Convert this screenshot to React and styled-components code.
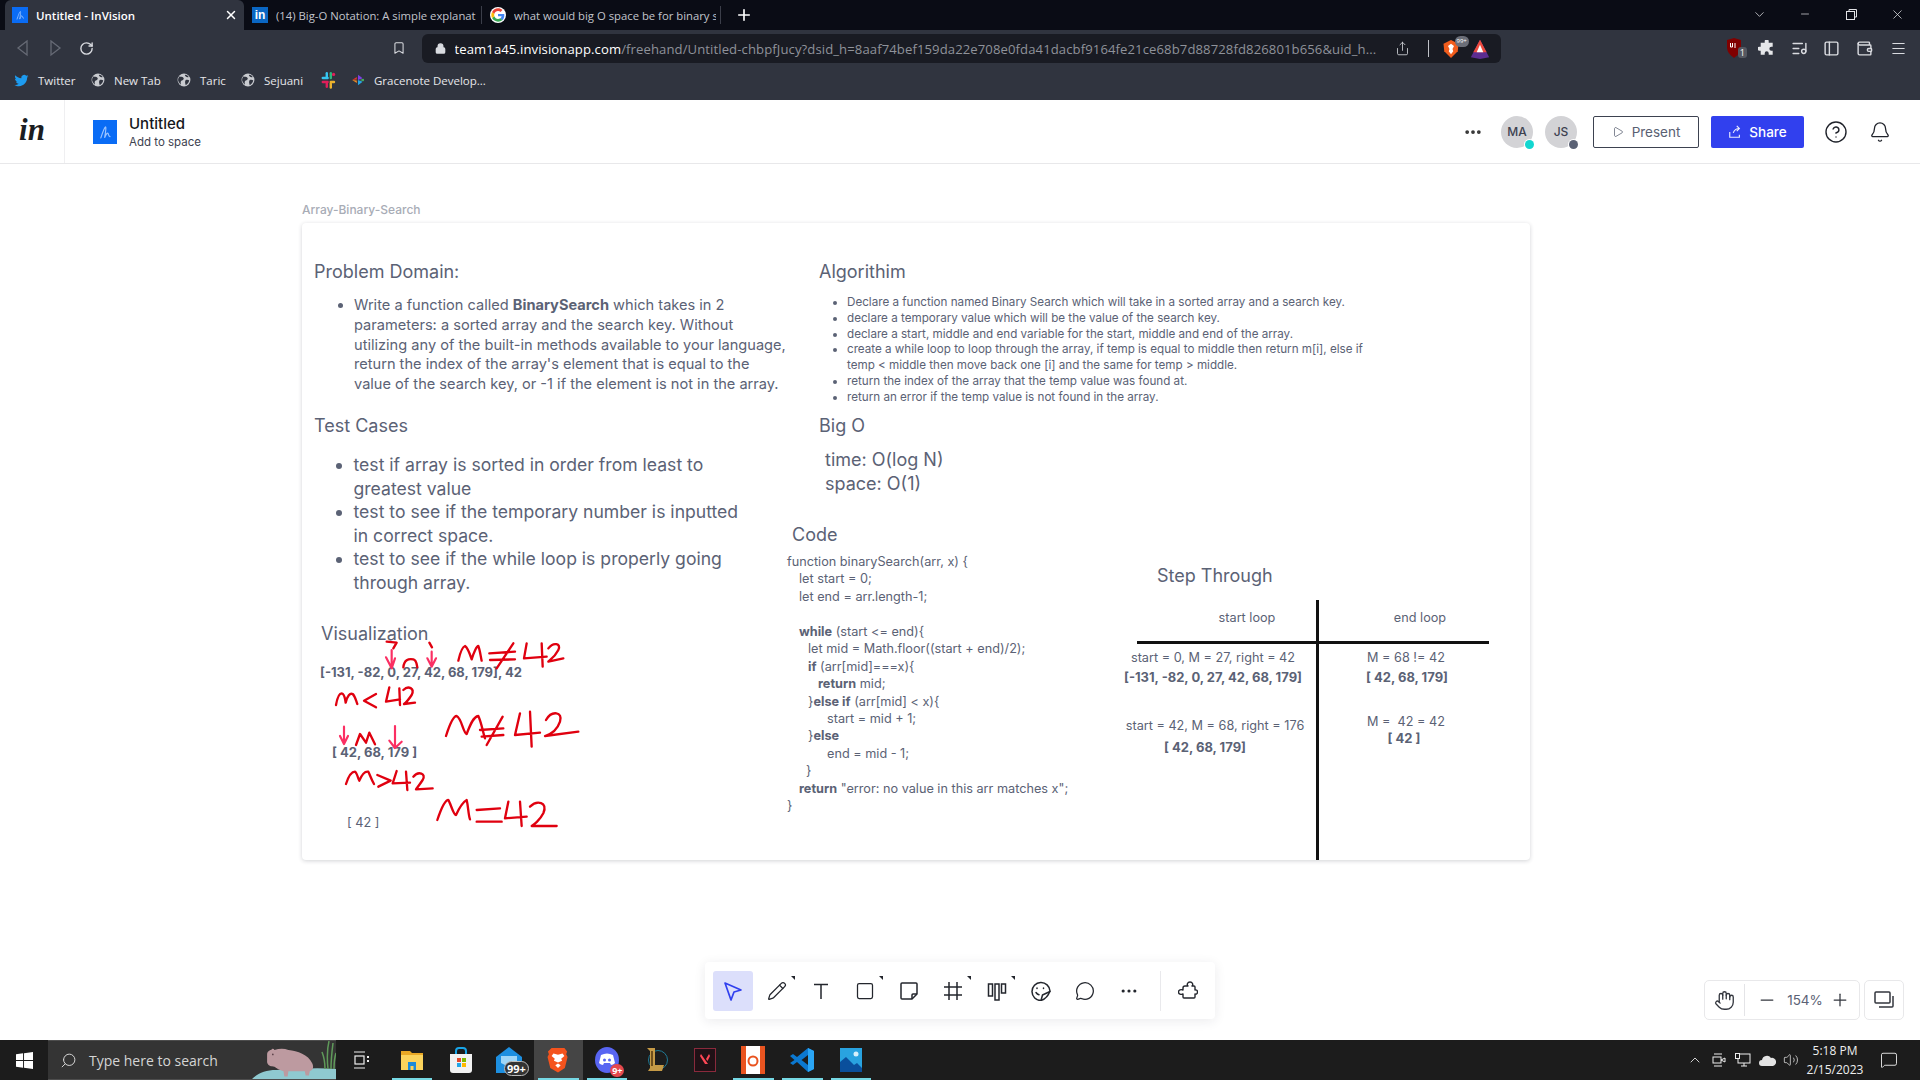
import React from 'react';
import styled, { createGlobalStyle } from 'styled-components';
import {
  Bell, Bookmark, ChevronDown, ChevronUp, CircleHelp, Ellipsis, Hand, ListMusic, Lock, MessageCircle, Minus,
  PanelLeft, Pencil, Play, Plus, RotateCw, Search, Share, Square, Wallet, X,
  Menu, Volume2, MessageSquare,
} from 'lucide-react';

const Global = createGlobalStyle`
  html, body { margin: 0; padding: 0; background: #fff; }
  * { box-sizing: border-box; }
  body { font-family: Inter, "Liberation Sans", sans-serif; }
`;

const Page = styled.div`
  width: 1920px; height: 1080px; overflow: hidden; display: flex; flex-direction: column; background: #fff;
`;

/* ---------- browser chrome ---------- */
const TabStrip = styled.div`
  height: 30px; background: #0a0c15; display: flex; align-items: stretch; padding-left: 5px;
  font-family: "Open Sans", Roboto, sans-serif; font-size: 11.5px; color: #c9ccd3;
`;
const Tab = styled.div`
  width: ${p => p.$w}px; display: flex; align-items: center; gap: 8px; padding-left: ${p => p.$pad}px; position: relative;
  background: ${p => (p.$active ? '#30343f' : 'transparent')};
  color: ${p => (p.$active ? '#fff' : '#c2c5cc')};
  font-weight: ${p => (p.$active ? 600 : 400)};
  font-size: ${p => (p.$active ? 11.5 : 11.3)}px;
  border-radius: ${p => (p.$active ? '6px 6px 0 0' : 0)};
  border-right: ${p => (p.$sep ? '1px solid #3b3e49' : 'none')};
  margin: ${p => (p.$sep ? '6px 0' : 0)};
`;
const TabTitle = styled.span`
  flex: 1; white-space: nowrap; overflow: hidden; margin-right: ${p => p.$mr || 0}px;
`;
const TabClose = styled.span`
  display: flex; margin-right: 6px; color: #fff;
`;
const NewTab = styled.div`
  width: 46px; display: flex; align-items: center; justify-content: center; color: #fff;
`;
const WindowButtons = styled.div`
  margin-left: auto; display: flex; align-items: center; color: #e2e3e6; padding-bottom: 2px;
`;
const WinBtn = styled.div`
  width: 46px; display: flex; justify-content: center;
`;
const NavBar = styled.div`
  height: 36px; background: #30343f; display: flex; align-items: center; padding-left: 6.500px; color: #d9dbe0;
  font-family: "Open Sans", Roboto, sans-serif;
`;
const NavIcon = styled.div`
  width: ${p => p.$w || 32}px; display: flex; justify-content: center; position: relative; flex-shrink: 0;
  color: ${p => p.$color || '#d9dbe0'};
`;
const NavGap = styled.div`
  width: 289px; flex-shrink: 0;
`;
const AddressBar = styled.div`
  margin-left: 16px; width: 1079px; height: 29px; margin-top: 4px; margin-bottom: 3px; background: #191b23; border-radius: 6px;
  display: flex; align-items: center; padding-left: 13px; font-size: 13.100px; flex-shrink: 0;
`;
const Url = styled.span`
  margin-left: 9px; width: 933px; white-space: nowrap; overflow: hidden; color: #8f929a; letter-spacing: 0.1px;
  b { color: #fff; font-weight: 500; }
`;
const ExtDivider = styled.div`
  width: 1px; height: 17px; background: #c0c2c8; margin: 0 8px 0 10px;
`;
const NavRight = styled.div`
  margin-left: 216.500px; display: flex; align-items: center;
`;
const CountBadge = styled.span`
  position: absolute; right: ${p => p.$r}px; top: ${p => p.$t}px; background: ${p => p.$bg}; color: #fff; font-size: ${p => p.$fs}px;
  padding: 0 2px; border-radius: 3px; line-height: 11px;
`;
const BookmarkBar = styled.div`
  height: 34px; background: #30343f; display: flex; align-items: center; padding: 0 0 6px 14px; gap: 0;
  font-family: "Open Sans", Roboto, sans-serif; font-size: 11.5px; color: #e6e7ea;
`;
const BookmarkItem = styled.div`
  display: flex; align-items: center; gap: 9px; width: ${p => p.$w}px; flex-shrink: 0; white-space: nowrap;
`;

/* ---------- app header ---------- */
const AppHeader = styled.header`
  height: 64px; display: flex; align-items: center; border-bottom: 1px solid #e8e8ea; background: #fff;
  padding-right: 29px;
`;
const LogoCell = styled.div`
  width: 65px; height: 100%; display: flex; align-items: center; justify-content: center; border-right: 1px solid #efeff1;
  font-family: "Liberation Serif", serif; font-style: italic; font-weight: 700; font-size: 31px; color: #1b1d22; padding-bottom: 4px;
`;
const DocIcon = styled.div`
  margin-left: 28px; width: 24px; height: 24px; background: #0a6cf5; display: flex; align-items: center; justify-content: center;
`;
const DocInfo = styled.div`
  margin-left: 12px; display: flex; flex-direction: column; gap: 2px; padding-top: 2px;
`;
const DocTitle = styled.div`
  font-size: 15px; font-weight: 500; color: #15171c; line-height: 18px;
`;
const DocSub = styled.div`
  font-size: 11.500px; color: #3d4250; line-height: 15px;
`;
const HeaderRight = styled.div`
  margin-left: auto; display: flex; align-items: center;
`;
const Dots = styled.div`
  display: flex; color: #333; margin-right: 18px;
`;
const Avatar = styled.div`
  width: 32px; height: 32px; border-radius: 50%; background: #d3d3d6; color: #3c4150; display: flex; align-items: center;
  justify-content: center; font-size: 12px; font-weight: 500; position: relative; margin-right: 12px;
  &::after {
    content: ''; position: absolute; right: -1px; bottom: -1px; width: 9px; height: 9px; border-radius: 50%;
    background: ${p => p.$dot}; box-shadow: 0 0 0 1px #fff;
  }
`;
const PresentButton = styled.button`
  width: 106px; height: 32px; margin-left: 4px; background: #fff; border: 1px solid #3d4250; border-radius: 2px; color: #596072;
  display: flex; align-items: center; justify-content: center; gap: 8px; font: 400 13.500px Inter, sans-serif;
`;
const ShareButton = styled.button`
  width: 93px; height: 32px; margin-left: 12px; background: #3140ee; border: 0; border-radius: 2px; color: #fff;
  display: flex; align-items: center; justify-content: center; gap: 7px; font: 500 13.500px Inter, sans-serif;
`;
const HeaderIcon = styled.div`
  display: flex; color: #20232b; margin-left: ${p => p.$ml}px;
`;

/* ---------- board ---------- */
const Board = styled.main`
  flex: 1; position: relative; padding: 38px 0 0 302px; background: #fff; color: #5b6275;
`;
const BoardLabel = styled.div`
  font-size: 12px; font-weight: 500; color: #a8acb6; line-height: 15px; margin-bottom: 6px;
`;
const Card = styled.section`
  width: 1228px; height: 637px; background: #fff; border-radius: 4px; position: relative;
  box-shadow: 0 1px 4px rgba(30, 35, 50, 0.2);
`;
const Placed = styled.div`
  position: absolute; left: ${p => p.$x}px; top: ${p => p.$y}px;
`;
const Heading = styled(Placed)`
  font-size: 18px; line-height: 24px; color: #5b6275; white-space: nowrap;
`;
const BulletList = styled.ul`
  position: absolute; margin: 0; left: ${p => p.$x}px; top: ${p => p.$y}px; width: ${p => p.$w}px; padding-left: ${p => p.$pad}px;
  font-size: ${p => p.$fs}px; line-height: ${p => p.$lh}px; color: #5b6275;
  b { font-weight: 700; }
`;
const BigOText = styled(Placed)`
  font-size: 18px; line-height: 24px; color: #5b6275; white-space: nowrap;
`;
const CodeBlock = styled(Placed)`
  font-size: 12.700px; line-height: 17.45px; color: #5b6275; white-space: nowrap;
  b { font-weight: 700; }
`;
const CodeLine = styled.div`
  padding-left: ${p => p.$indent}px; height: 17.45px;
`;
const SmallText = styled(Placed)`
  font-size: ${p => (p.$bold ? 13 : 12.7)}px; line-height: 18px; color: #5b6275; white-space: nowrap; font-weight: ${p => (p.$bold ? 700 : 400)};
`;
const CellText = styled(SmallText)`
  transform: translateX(-50%);
`;
const VRule = styled.div`
  position: absolute; left: 1014px; top: 377px; width: 3px; height: 260px; background: #111;
`;
const HRule = styled.div`
  position: absolute; left: 835px; top: 418px; width: 352px; height: 3px; background: #111;
`;
const Ink = styled.svg`
  position: absolute; left: -2px; top: 387px; width: 300px; height: 240px; pointer-events: none; fill: none;
  stroke-linecap: round; stroke-linejoin: round;
`;

/* ---------- floating tools ---------- */
const ToolDock = styled.div`
  position: absolute; left: 705px; top: 798px; width: 510px; height: 57px; background: #fff; border-radius: 4px;
  box-shadow: 0 2px 12px rgba(30, 35, 50, 0.09); display: flex; align-items: center; padding-left: 8px; color: #23262d;
`;
const ToolButton = styled.div`
  width: 40px; height: 40px; margin-right: 4px; border-radius: 3px; display: flex; align-items: center; justify-content: center; position: relative;
  background: ${p => (p.$active ? '#dcdffb' : 'transparent')}; color: ${p => (p.$active ? '#3140ee' : '#23262d')};
  ${p => p.$caret && `
    &::after {
      content: ''; position: absolute; right: 2px; top: 5px; width: 0; height: 0;
      border-top: 4px solid #23262d; border-left: 4px solid transparent;
    }
  `}
`;
const DockDivider = styled.div`
  width: 1px; height: 40px; background: #e9e9ec; margin: 0 7px 0 7px;
`;
const ViewGroup = styled.div`
  position: absolute; top: 816px; right: ${p => p.$right}px; width: ${p => p.$w}px; height: 40px; background: #fff;
  border: 1px solid #e8e8ea; border-radius: 5px; display: flex; align-items: center; color: #33363e;
`;
const ViewIcon = styled.div`
  width: ${p => p.$w}px; display: flex; justify-content: center; flex-shrink: 0;
`;
const ViewDivider = styled.div`
  width: 1px; height: 32px; background: #e4e4e7; flex-shrink: 0;
`;
const ZoomValue = styled.div`
  width: 32px; display: flex; justify-content: center; white-space: nowrap; font-size: 13.500px; color: #5b6275; flex-shrink: 0;
`;

/* ---------- taskbar ---------- */
const Taskbar = styled.footer`
  height: 40px; background: #1c1c1c; display: flex; align-items: stretch; color: #eee; font-family: "Open Sans", Roboto, sans-serif;
`;
const StartCell = styled.div`
  width: 48px; display: flex; align-items: center; justify-content: center;
`;
const SearchBox = styled.div`
  width: 288px; background: #343434; display: flex; align-items: center; padding-left: 12px; gap: 12px; position: relative;
  border: 1px solid #4d4d4d; border-width: 1px 0; font-size: 14px; color: #d5d5d5; overflow: hidden;
`;
const SearchGlyph = styled(Search)`
  transform: scaleX(-1);
`;
const Hippo = styled.svg`
  position: absolute; right: 0; bottom: 0; width: 84px; height: 40px;
`;
const TaskView = styled.div`
  width: 51.5px; display: flex; align-items: center; justify-content: center;
`;
const TaskSlot = styled.div`
  width: 48.8px; display: flex; align-items: center; justify-content: center; position: relative; flex-shrink: 0;
  background: ${p => (p.$active ? '#454545' : 'transparent')};
  ${p => p.$open && `
    &::after {
      content: ''; position: absolute; left: 4px; right: 4px; bottom: 0; height: 2px; background: #76d8e4;
    }
  `}
`;
const Tray = styled.div`
  margin-left: auto; display: flex; align-items: center; padding-right: 22px; color: #eee;
`;
const TrayIcon = styled.div`
  width: 24px; display: flex; justify-content: center;
`;
const Clock = styled.div`
  margin-left: 1px; width: 62px; text-align: center; font-size: 12px; line-height: 19px; color: #eee;
`;
const NotifyIcon = styled.div`
  margin-left: 14px; display: flex;
`;
const SlotBadge = styled.span`
  position: absolute; right: ${p => p.$r}px; bottom: ${p => p.$b}px; background: ${p => p.$bg}; color: #fff; font-size: ${p => p.$fs}px;
  font-weight: 700; border-radius: 8px; padding: 0 2px; line-height: 13px; border: ${p => p.$bd || 'none'};
`;

/* ---------- small drawings ---------- */
const Scribble = ({ size = 16 }) => (
  <svg width={size} height={size} viewBox="0 0 24 24" fill="none">
    <path d="M7 19C9 13 11 7 12.5 6c1-.5.5 5-1 13 1.5-4 3-6 4-5.500s0 3.500 2.500 4" stroke="#9cc4ff" strokeWidth="1.400" strokeLinecap="round" />
  </svg>
);
const FavSquare = styled.span`
  width: 16px; height: 16px; background: ${p => p.$bg}; color: #fff; display: flex; align-items: center; justify-content: center; flex-shrink: 0;
  font: 700 12px "Liberation Sans", sans-serif;
`;
const InvisionFav = () => (
  <FavSquare $bg="#0a6cf5"><Scribble size={14} /></FavSquare>
);
const GoogleIcon = styled.svg`
  flex-shrink: 0;
`;
const GoogleG = () => (
  <GoogleIcon width="16" height="16" viewBox="0 0 48 48">
    <circle cx="24" cy="24" r="24" fill="#fff" />
    <path fill="#4285F4" d="M43 24.500c0-1.500-.1-2.600-.4-3.800H24v7.200h10.900c-.5 2.700-2 5-4.400 6.500l6.700 5.200c4-3.700 5.800-9.100 5.800-15.100z" />
    <path fill="#34A853" d="M24 44c5.400 0 9.900-1.800 13.200-4.800l-6.700-5.200c-1.800 1.200-4 2-6.500 2-5.100 0-9.400-3.400-10.900-8.100l-6.900 5.300C9.500 39.600 16.200 44 24 44z" />
    <path fill="#FBBC05" d="M13.100 27.900c-.8-2.400-.8-5.300 0-7.800l-6.900-5.300c-2.900 5.800-2.900 12.600 0 18.400z" />
    <path fill="#EA4335" d="M24 12.100c3 0 5.600 1 7.600 2.900l5.800-5.800C33.900 6 29.400 4 24 4 16.200 4 9.500 8.400 6.200 14.800l6.900 5.300c1.500-4.600 5.800-8 10.900-8z" />
  </GoogleIcon>
);
const Globe = () => (
  <svg width="14" height="14" viewBox="0 0 24 24">
    <circle cx="12" cy="12" r="11" fill="#c9cbd0" />
    <path d="M4 6c3 1 5 0 7 2s-1 4-3 5-2 4-1 7c-3-2-6-6-5-10zM14 3c3 0 5 2 6 4-2 1-4 0-5-1s-2-2-1-3zM15 12c3-1 5 0 6 1-1 4-3 6-6 8-1-3-2-7 0-9z" fill="#30343f" />
  </svg>
);
const TwitterBird = () => (
  <svg width="15" height="15" viewBox="0 0 24 24">
    <path fill="#1d9bf0" d="M23 5c-.8.4-1.700.6-2.600.7.900-.6 1.600-1.400 2-2.500-.9.500-1.900.9-2.900 1.100A4.600 4.600 0 0 0 11.700 8.500C7.900 8.300 4.500 6.500 2.200 3.700c-1.200 2.100-.6 4.800 1.400 6.100-.7 0-1.400-.2-2-.6 0 2.200 1.500 4.100 3.700 4.600-.7.200-1.400.2-2.100.1.600 1.900 2.300 3.200 4.300 3.200A9.300 9.300 0 0 1 .7 19c2.100 1.300 4.500 2.100 7.100 2.100 8.600 0 13.500-7.300 13.200-13.800.9-.6 1.600-1.400 2-2.300z" />
  </svg>
);
const Slack = () => (
  <svg width="16" height="20" viewBox="0 0 20 24">
    <rect x="2" y="8" width="9" height="3" rx="1.500" fill="#36c5f0" />
    <rect x="7" y="2" width="3" height="8" rx="1.500" fill="#36c5f0" />
    <rect x="12" y="2" width="3" height="9" rx="1.500" fill="#2eb67d" />
    <circle cx="17" cy="5" r="2" fill="#e01e5a" />
    <rect x="2" y="13" width="9" height="3" rx="1.500" fill="#e01e5a" />
    <rect x="7" y="14" width="3" height="8" rx="1.500" fill="#e01e5a" />
    <rect x="12" y="13" width="7" height="3" rx="1.500" fill="#ecb22e" />
    <rect x="12" y="15" width="3" height="8" rx="1.500" fill="#ecb22e" />
  </svg>
);
const Gracenote = () => (
  <svg width="14" height="14" viewBox="0 0 24 24">
    <path d="M2 12l8-5v4z" fill="#e5342b" />
    <path d="M2 12l8 5v-4z" fill="#f08a24" />
    <path d="M12 3l8 6-8 3z" fill="#7b3fe4" />
    <path d="M12 21l8-6-8-3z" fill="#27a6e5" />
    <path d="M15 12l7-2v4z" fill="#4cc065" />
  </svg>
);
const BraveLion = ({ size = 20 }) => (
  <svg width={size} height={size * 1.16} viewBox="0 0 24 28">
    <path fill="#f4531d" d="M5 1h14l3 4-1 3 1.500 3-3 12L12 28l-8.500-5-3-12L2 8 1 5z" />
    <path fill="#fff" d="M7 7l5 1.500L17 7l2 3-3.500 3 1 2L12 17l-4.500-2 1-2L5 10zM9 20l3-2 3 2-3 3z" />
  </svg>
);
const BatShield = () => (
  <svg width="18" height="20" viewBox="0 0 24 26">
    <path fill="#f15d1d" d="M12 1l10 5-1 10-9 9-9-9-1-10z" />
    <path fill="#fff" d="M12 6l4 3-2 4 1 3-3 4-3-4 1-3-2-4z" />
  </svg>
);
const BatTriangle = () => (
  <svg width="20" height="20" viewBox="0 0 24 24">
    <path fill="#5c2d91" d="M12 1L23 22 12 24 1 22z" />
    <path fill="#ee4a3c" d="M12 1l8 15H4z" />
    <path fill="#fff" d="M12 7l4 9H8z" />
  </svg>
);
const UBlock = () => (
  <svg width="14" height="20" viewBox="0 0 14 20">
    <path fill="#800000" d="M7 0l7 2v7c0 5-3 8-7 11-4-3-7-6-7-11V2z" />
    <path stroke="#fff" strokeWidth="1" fill="none" d="M3.500 5v4h2V5M8 5v5" />
  </svg>
);
const SolidPuzzle = () => (
  <svg width="17" height="17" viewBox="0 0 24 24">
    <path fill="#e6e7ea" d="M9 2a3 3 0 0 1 6 0v2h6v6h-2a3 3 0 0 0 0 6h2v6h-6v-2a3 3 0 0 0-6 0v2H3v-6H1a3 3 0 0 1 0-6h2V4h6z" transform="translate(1 0) scale(.94)" />
  </svg>
);
const TypeTool = () => (
  <svg width="20" height="20" viewBox="0 0 20 20" fill="none" stroke="currentColor" strokeWidth="1.500">
    <path d="M3 3.500h14M10 3.500V18" />
  </svg>
);
const ArrowTool = () => (
  <svg width="22" height="22" viewBox="0 0 22 22" fill="none" stroke="currentColor" strokeWidth="1.700" strokeLinejoin="round">
    <path d="M3 3l16 7-7 2-3 8z" />
  </svg>
);
const StickyTool = () => (
  <svg width="20" height="20" viewBox="0 0 20 20" fill="none" stroke="currentColor" strokeWidth="1.500" strokeLinejoin="round">
    <path d="M2 3a1 1 0 0 1 1-1h14a1 1 0 0 1 1 1v10l-5 5H3a1 1 0 0 1-1-1z" />
    <path d="M18 13h-4a1 1 0 0 0-1 1v4" />
  </svg>
);
const GridTool = () => (
  <svg width="20" height="20" viewBox="0 0 20 20" fill="none" stroke="currentColor" strokeWidth="1.500">
    <path d="M6 1v18M14 1v18M1 6h18M1 14h18" />
  </svg>
);
const ColumnsTool = () => (
  <svg width="20" height="20" viewBox="0 0 20 20" fill="none" stroke="currentColor" strokeWidth="1.500">
    <rect x="1.500" y="3" width="4" height="12" />
    <rect x="8" y="3" width="4" height="16" />
    <rect x="14.500" y="3" width="4" height="9" />
  </svg>
);
const StickerTool = () => (
  <svg width="20" height="20" viewBox="0 0 20 20" fill="none" stroke="currentColor" strokeWidth="1.500" strokeLinecap="round" strokeLinejoin="round">
    <path d="M19 10A9 9 0 1 0 10 19.500c3-1 7-4 9-9.500z" />
    <path d="M19 10.500l-7.500 3.500-1.500 5.500" />
    <path d="M6 7v.5M12.500 7v.5M5 11.500c1 1.500 2 2 3 2.200" />
  </svg>
);
const PuzzleTool = () => (
  <svg width="20" height="20" viewBox="0 0 20 20" fill="none" stroke="currentColor" strokeWidth="1.400" strokeLinejoin="round">
    <path d="M7 5h3c-1.500-1.500-.5-4 2-4s3.500 2.500 2 4h2a1 1 0 0 1 1 1v3c1.500-.5 2.500.5 2.500 2s-1 2.500-2.500 2v3a1 1 0 0 1-1 1H6a1 1 0 0 1-1-1v-3c-2 1-4.500 0-4.500-2s2.500-3 4.500-2V7a2 2 0 0 1 2-2z" />
  </svg>
);
const StackIcon = () => (
  <svg width="20" height="18" viewBox="0 0 20 18" fill="none" stroke="currentColor" strokeWidth="1.500">
    <rect x="1" y="1" width="15" height="11" rx="1" />
    <path d="M19 5v10a1 1 0 0 1-1 1H5" />
  </svg>
);
const ShareOut = () => (
  <svg width="14" height="14" viewBox="0 0 16 16" fill="none" stroke="#fff" strokeWidth="1.300">
    <path d="M2 8v6h11V11M6 9c1-3 3-5 7-5M10 1l3 3-3 3" opacity=".9" />
  </svg>
);
const WinLogo = () => (
  <svg width="17" height="17" viewBox="0 0 18 18" fill="#fff">
    <path d="M0 2.500L7.500 1.400V8.500H0zM8.500 1.200L18 0V8.500H8.500zM0 9.500H7.500V16.600L0 15.500zM8.500 9.500H18V18L8.500 16.800z" />
  </svg>
);
const TaskViewIcon = () => (
  <svg width="16" height="18" viewBox="0 0 16 18" fill="none" stroke="#eee" strokeWidth="1.200">
    <path d="M0 1h11M0 17h11" />
    <rect x="1" y="5" width="9" height="8" />
    <rect x="13" y="5" width="2" height="2" fill="#eee" stroke="none" />
    <rect x="13" y="9" width="2" height="2" fill="#eee" stroke="none" />
  </svg>
);
const Explorer = () => (
  <svg width="22" height="20" viewBox="0 0 22 20">
    <path fill="#e9a825" d="M0 1h9l2 2h11v17H0z" />
    <path fill="#fbd35c" d="M0 5h22v15H0z" />
    <path fill="#1a8ad8" d="M7 12h8v8h-2.500v-4h-3v4H7z" />
  </svg>
);
const Store = () => (
  <svg width="24" height="26" viewBox="0 0 24 26">
    <path d="M7 7V4a3 3 0 0 1 3-3h4a3 3 0 0 1 3 3v3" fill="none" stroke="#18a5e8" strokeWidth="2" />
    <path fill="#f2f2f2" d="M1 7h22v16a3 3 0 0 1-3 3H4a3 3 0 0 1-3-3z" />
    <rect x="8" y="11" width="4" height="4" fill="#e5492c" />
    <rect x="13" y="11" width="4" height="4" fill="#7fba00" />
    <rect x="8" y="16" width="4" height="4" fill="#22a7e8" />
    <rect x="13" y="16" width="4" height="4" fill="#ffb900" />
  </svg>
);
const MailIcon = () => (
  <svg width="26" height="26" viewBox="0 0 26 26">
    <path fill="#1d8fe0" d="M0 10L13 0l13 10v16H0z" />
    <path fill="#9fd6f7" d="M5 9h16v7l-8 4-8-4z" />
  </svg>
);
const DiscordIcon = () => (
  <svg width="24" height="26" viewBox="0 0 24 26">
    <ellipse cx="12" cy="13" rx="12" ry="13" fill="#5865f2" />
    <path fill="#fff" d="M6 8c4-2 8-2 12 0l2 8c-1 1-3 2-4 2l-1-2H9l-1 2c-1 0-3-1-4-2z" />
    <circle cx="9.500" cy="13" r="1.500" fill="#5865f2" />
    <circle cx="14.500" cy="13" r="1.500" fill="#5865f2" />
  </svg>
);
const LolIcon = () => (
  <svg width="24" height="26" viewBox="0 0 24 26">
    <circle cx="14" cy="13" r="9.500" fill="none" stroke="#1f7a96" strokeWidth="1" />
    <path fill="#c59a46" d="M3 1h8v17h9l-2 6H4l2-3V4z" />
    <path fill="#6e4f1c" d="M7 4h2v15H7z" />
  </svg>
);
const ValorantIcon = () => (
  <svg width="22" height="24" viewBox="0 0 22 24">
    <rect x="0.500" y="0.500" width="21" height="23" fill="#201116" stroke="#8a2a3c" />
    <path fill="#ff4655" d="M6 8l5 8h3L7 6zM15 6l-3 5 1.500 2L16 8z" />
  </svg>
);
const UbuntuDoc = () => (
  <svg width="24" height="28" viewBox="0 0 24 28">
    <rect width="24" height="28" fill="#fff" />
    <rect width="5" height="28" fill="#e95420" />
    <rect x="19" width="5" height="28" fill="#e95420" />
    <circle cx="12" cy="15" r="4.500" fill="none" stroke="#e95420" strokeWidth="2" />
  </svg>
);
const VsCode = () => (
  <svg width="24" height="24" viewBox="0 0 24 24">
    <path fill="#0b78d0" d="M18 0l6 3v18l-6 3L7 14l-4 3-3-2 4.500-3L0 8l3-2 4 3z" />
    <path fill="#2aa5f5" d="M18 0l6 3v18l-6 3z" />
    <path fill="#1c1c1c" d="M18 7v10l-6.500-5z" />
  </svg>
);
const Photos = () => (
  <svg width="22" height="24" viewBox="0 0 22 24">
    <rect width="22" height="24" fill="#29a3e0" />
    <circle cx="16" cy="6" r="2.500" fill="#d7f0fb" />
    <path fill="#0a4f9c" d="M0 24V14l6-5 8 8 3-2 5 5v4z" />
  </svg>
);

const GreyBadge = styled.span`
  position: absolute; left: 18px; top: -3px; background: #6b6e78; color: #fff; font-size: 6px; border-radius: 8px; padding: 2px 2px; line-height: 7px;
`;

const codeLines = [
  [0, 'function binarySearch(arr, x) {'],
  [12, 'let start = 0;'],
  [12, 'let end = arr.length-1;'],
  [12, ''],
  [12, <><b>while</b> (start &lt;= end){'{'}</>],
  [21, 'let mid = Math.floor((start + end)/2);'],
  [21, <><b>if</b> (arr[mid]===x){'{'}</>],
  [31, <><b>return</b> mid;</>],
  [21, <>}<b>else if</b> (arr[mid] &lt; x){'{'}</>],
  [40, 'start = mid + 1;'],
  [21, <>}<b>else</b></>],
  [40, 'end = mid - 1;'],
  [19, '}'],
  [12, <><b>return</b> "error: no value in this arr matches x";</>],
  [0, '}'],
];

const redPaths = [
  'M260 95L290 98L280 115',
  'M310 172C312 150 325 145 340 148C350 150 350 165 352 172',
  'M388 98L396 112',
  'M475 152C480 130 488 110 495 108C505 115 512 140 515 148C520 130 530 108 535 108C540 120 542 140 545 152',
  'M568 130L645 125M570 150L645 148M640 100L590 175',
  'M680 100L672 145L740 140M725 100L728 170',
  'M745 115C760 95 785 100 775 120C765 140 750 150 745 155L790 145',
  'M108 285C112 262 118 250 125 250C135 252 135 268 137 278C142 258 150 248 158 252C165 258 168 272 172 282',
  'M228 252L192 272L228 292',
  'M268 232L258 275L300 268M298 235L300 285',
  'M310 240C325 225 345 235 335 255C325 270 315 280 312 282L345 278',
  'M168 405L180 372L198 398L208 368L225 403',
  'M438 378C450 340 462 318 470 318C485 325 490 370 500 372C510 345 520 320 535 318C545 340 548 365 555 385',
  'M540 360L610 355M545 380L610 375M608 320L560 405',
  'M660 310L645 375L720 368M690 305L695 410',
  'M738 330C755 300 790 305 780 335C770 365 745 375 735 378L835 365',
  'M138 522C145 500 155 485 165 485C172 490 175 510 178 512C185 495 195 483 205 485C210 495 215 510 222 522',
  'M232 495L272 512L235 530',
  'M290 483L278 520L330 518M318 485L322 540',
  'M340 500C355 482 380 490 368 510C358 525 350 535 348 538L398 535',
  'M412 630C422 600 435 570 445 570C452 580 460 615 468 615C475 600 490 575 500 570C505 590 505 615 510 628',
  'M530 600L600 595M530 635L605 635',
  'M625 575L615 625L680 620M660 575L665 648',
  'M690 590C710 570 745 575 730 610C720 630 700 645 695 648L770 648',
];
const pinkPaths = [
  'M275 120L275 170M258 142L275 175L285 145',
  'M395 125L395 170M382 145L395 170L408 145',
  'M132 350L132 400M120 378L132 402L144 378',
  'M285 348L285 412M268 392L285 414L305 395',
];

export default function App() {
  return (
    <Page>
      <Global />
      <TabStrip>
        <Tab $active $w={239} $pad={7}>
          <InvisionFav />
          <TabTitle>Untitled - InVision</TabTitle>
          <TabClose><X size={14} strokeWidth={2.500} /></TabClose>
        </Tab>
        <Tab $w={238} $pad={8} $sep>
          <FavSquare $bg="#0a66c2">in</FavSquare>
          <TabTitle $mr={4}>(14) Big-O Notation: A simple explanat</TabTitle>
        </Tab>
        <Tab $w={239} $pad={8} $sep>
          <GoogleG />
          <TabTitle $mr={4}>what would big O space be for binary s</TabTitle>
        </Tab>
        <NewTab><Plus size={18} strokeWidth={2.200} /></NewTab>
        <WindowButtons>
          <WinBtn><ChevronDown size={15} strokeWidth={1.200} /></WinBtn>
          <WinBtn><Minus size={12} strokeWidth={1.400} /></WinBtn>
          <WinBtn>
            <svg width="11" height="11" viewBox="0 0 11 11" fill="none" stroke="currentColor"><rect x="0.500" y="2.500" width="8" height="8" /><path d="M3 2.500V.5h7.500V8H8.500" /></svg>
          </WinBtn>
          <WinBtn><X size={15} strokeWidth={1.200} /></WinBtn>
        </WindowButtons>
      </TabStrip>

      <NavBar>
        <NavIcon $color="#666a75">
          <svg width="14" height="18" viewBox="0 0 14 18" fill="none" stroke="currentColor" strokeWidth="1.300"><path d="M11 2L2 9l9 7z" /></svg>
        </NavIcon>
        <NavIcon $color="#666a75">
          <svg width="14" height="18" viewBox="0 0 14 18" fill="none" stroke="currentColor" strokeWidth="1.300"><path d="M3 2l9 7-9 7z" /></svg>
        </NavIcon>
        <NavIcon><RotateCw size={15} strokeWidth={2.200} /></NavIcon>
        <NavGap />
        <NavIcon $w={14}><Bookmark size={14} strokeWidth={1.800} /></NavIcon>
        <AddressBar>
          <Lock size={11} strokeWidth={3} fill="#d9dbe0" />
          <Url><b>team1a45.invisionapp.com</b>/freehand/Untitled-chbpfJucy?dsid_h=8aaf74bef159da22e708e0fda41dacbf9164fe21ce68b7d88728fd826801b656&amp;uid_h...</Url>
          <NavIcon $w={30}><Share size={15} strokeWidth={1.300} /></NavIcon>
          <ExtDivider />
          <NavIcon $w={28}><BatShield /><GreyBadge>99+</GreyBadge></NavIcon>
          <NavIcon $w={30}><BatTriangle /></NavIcon>
        </AddressBar>
        <NavRight>
          <NavIcon $w={33}>
            <UBlock />
            <CountBadge $r={3} $t={9} $bg="#555861" $fs={9}>1</CountBadge>
          </NavIcon>
          <NavIcon $w={33}><SolidPuzzle /></NavIcon>
          <NavIcon $w={32}><ListMusic size={17} /></NavIcon>
          <NavIcon $w={33}><PanelLeft size={17} /></NavIcon>
          <NavIcon $w={33}><Wallet size={17} /></NavIcon>
          <NavIcon $w={34}><Menu size={17} strokeWidth={1.600} /></NavIcon>
        </NavRight>
      </NavBar>

      <BookmarkBar>
        <BookmarkItem $w={77}><TwitterBird />Twitter</BookmarkItem>
        <BookmarkItem $w={86}><Globe />New Tab</BookmarkItem>
        <BookmarkItem $w={64}><Globe />Taric</BookmarkItem>
        <BookmarkItem $w={79}><Globe />Sejuani</BookmarkItem>
        <BookmarkItem $w={31}><Slack /></BookmarkItem>
        <BookmarkItem $w={160}><Gracenote />Gracenote Develop...</BookmarkItem>
      </BookmarkBar>

      <AppHeader>
        <LogoCell>in</LogoCell>
        <DocIcon><Scribble size={20} /></DocIcon>
        <DocInfo>
          <DocTitle>Untitled</DocTitle>
          <DocSub>Add to space</DocSub>
        </DocInfo>
        <HeaderRight>
          <Dots><Ellipsis size={20} strokeWidth={2.500} /></Dots>
          <Avatar $dot="#12d6d0">MA</Avatar>
          <Avatar $dot="#5b6275">JS</Avatar>
          <PresentButton><Play size={12} strokeWidth={1.500} />Present</PresentButton>
          <ShareButton><ShareOut />Share</ShareButton>
          <HeaderIcon $ml={20}><CircleHelp size={24} strokeWidth={1.400} /></HeaderIcon>
          <HeaderIcon $ml={21}><Bell size={22} strokeWidth={1.400} /></HeaderIcon>
        </HeaderRight>
      </AppHeader>

      <Board>
        <BoardLabel>Array-Binary-Search</BoardLabel>
        <Card>
          <Heading $x={12} $y={37}>Problem Domain:</Heading>
          <BulletList $x={12} $y={73} $w={473} $pad={40} $fs={14.600} $lh={19.800}>
            <li>Write a function called <b>BinarySearch</b> which takes in 2 parameters: a sorted array and the search key. Without utilizing any of the built-in methods available to your language, return the index of the array's element that is equal to the value of the search key, or -1 if the element is not in the array.</li>
          </BulletList>

          <Heading $x={12} $y={191}>Test Cases</Heading>
          <BulletList $x={12} $y={230} $w={434} $pad={39.500} $fs={17.600} $lh={23.600}>
            <li>test if array is sorted in order from least to greatest value</li>
            <li>test to see if the temporary number is inputted in correct space.</li>
            <li>test to see if the while loop is properly going through array.</li>
          </BulletList>

          <Heading $x={517} $y={37}>Algorithim</Heading>
          <BulletList $x={518} $y={72} $w={562} $pad={27} $fs={11.650} $lh={15.800}>
            <li>Declare a function named Binary Search which will take in a sorted array and a search key.</li>
            <li>declare a temporary value which will be the value of the search key.</li>
            <li>declare a start, middle and end variable for the start, middle and end of the array.</li>
            <li>create a while loop to loop through the array, if temp is equal to middle then return m[i], else if temp &lt; middle then move back one [i] and the same for temp &gt; middle.</li>
            <li>return the index of the array that the temp value was found at.</li>
            <li>return an error if the temp value is not found in the array.</li>
          </BulletList>

          <Heading $x={517} $y={191}>Big O</Heading>
          <BigOText $x={523} $y={225}>time: O(log N)<br />space: O(1)</BigOText>

          <Heading $x={490} $y={300}>Code</Heading>
          <CodeBlock $x={485} $y={330}>
            {codeLines.map(([indent, text], i) => <CodeLine key={i} $indent={indent}>{text}</CodeLine>)}
          </CodeBlock>

          <Heading $x={19} $y={399}>Visualization</Heading>
          <SmallText $x={18} $y={440} $bold>[-131, -82, 0, 27, 42, 68, 179], 42</SmallText>
          <SmallText $x={30} $y={520} $bold>[ 42, 68, 179 ]</SmallText>
          <SmallText $x={45} $y={591}>[ 42 ]</SmallText>

          <Heading $x={855} $y={341}>Step Through</Heading>
          <VRule />
          <HRule />
          <CellText $x={945} $y={386}>start loop</CellText>
          <CellText $x={1118} $y={386}>end loop</CellText>
          <CellText $x={911} $y={426}>start = 0, M = 27, right = 42</CellText>
          <CellText $x={911} $y={445} $bold>[-131, -82, 0, 27, 42, 68, 179]</CellText>
          <CellText $x={913} $y={494}>start = 42, M = 68, right = 176</CellText>
          <CellText $x={903} $y={515} $bold>[ 42, 68, 179]</CellText>
          <CellText $x={1104} $y={426}>M = 68 != 42</CellText>
          <CellText $x={1105} $y={445} $bold>[ 42, 68, 179]</CellText>
          <CellText $x={1104} $y={490}>M =&nbsp; 42 = 42</CellText>
          <CellText $x={1102} $y={506} $bold>[ 42 ]</CellText>

          <Ink viewBox="0 0 900 720">
            {pinkPaths.map(d => <path key={d} d={d} stroke="#fb2f63" strokeWidth="6.500" />)}
            {redPaths.map(d => <path key={d} d={d} stroke="#e0000f" strokeWidth="7" />)}
          </Ink>
        </Card>

        <ToolDock>
          <ToolButton $active><ArrowTool /></ToolButton>
          <ToolButton $caret><Pencil size={20} strokeWidth={1.500} /></ToolButton>
          <ToolButton><TypeTool /></ToolButton>
          <ToolButton $caret><Square size={20} strokeWidth={1.500} /></ToolButton>
          <ToolButton><StickyTool /></ToolButton>
          <ToolButton $caret><GridTool /></ToolButton>
          <ToolButton $caret><ColumnsTool /></ToolButton>
          <ToolButton><StickerTool /></ToolButton>
          <ToolButton><MessageCircle size={20} strokeWidth={1.500} /></ToolButton>
          <ToolButton><Ellipsis size={20} strokeWidth={1.800} /></ToolButton>
          <DockDivider />
          <ToolButton><PuzzleTool /></ToolButton>
        </ToolDock>

        <ViewGroup $right={60} $w={156}>
          <ViewIcon $w={39}><Hand size={21} strokeWidth={1.500} /></ViewIcon>
          <ViewDivider />
          <ViewIcon $w={44}><Minus size={20} strokeWidth={1.500} /></ViewIcon>
          <ZoomValue>154%</ZoomValue>
          <ViewIcon $w={38}><Plus size={20} strokeWidth={1.500} /></ViewIcon>
        </ViewGroup>
        <ViewGroup $right={16} $w={40}>
          <ViewIcon $w={38}><StackIcon /></ViewIcon>
        </ViewGroup>
      </Board>

      <Taskbar>
        <StartCell><WinLogo /></StartCell>
        <SearchBox>
          <SearchGlyph size={17} strokeWidth={1.400} />
          Type here to search
          <Hippo viewBox="0 0 84 40">
            <path d="M0 40c6-6 14-9 24-9 20-1 40-3 60-1v10z" fill="#8fc9d0" />
            <path d="M76 30c-1-10-1-20 1-28M79 30c0-10 1-18 2-26M73 30c0-6-1-12-3-17M82 30c0-6 0-10 2-16" stroke="#5f9a5a" strokeWidth="1.500" fill="none" />
            <g transform="translate(11 4) scale(.82 .88)">
              <path d="M5 13c0-3 3-5 5-5 1-2 3-2 4 0 6-2 12-2 17 0 11 1 24 5 29 15 2 4 1 7-1 8l-2 1-1 5h-4l-1-5H31l-1 6h-4l-1-6c-5-1-8-3-11-5-4 0-8-1-9-5z" fill="#bd9aa0" />
              <circle cx="12" cy="13" r="1" fill="#5a4048" />
            </g>
          </Hippo>
        </SearchBox>
        <TaskView><TaskViewIcon /></TaskView>
        <TaskSlot $open><Explorer /></TaskSlot>
        <TaskSlot><Store /></TaskSlot>
        <TaskSlot>
          <MailIcon />
          <SlotBadge $r={5} $b={4} $bg="#333" $fs={11} $bd="1px solid #bbb">99+</SlotBadge>
        </TaskSlot>
        <TaskSlot $active $open><BraveLion size={22} /></TaskSlot>
        <TaskSlot $open>
          <DiscordIcon />
          <SlotBadge $r={7} $b={3} $bg="#e5484d" $fs={9}>9+</SlotBadge>
        </TaskSlot>
        <TaskSlot><LolIcon /></TaskSlot>
        <TaskSlot><ValorantIcon /></TaskSlot>
        <TaskSlot $open><UbuntuDoc /></TaskSlot>
        <TaskSlot $open><VsCode /></TaskSlot>
        <TaskSlot $open><Photos /></TaskSlot>
        <Tray>
          <TrayIcon><ChevronUp size={16} strokeWidth={1.300} /></TrayIcon>
          <TrayIcon>
            <svg width="14" height="16" viewBox="0 0 14 16" fill="none" stroke="currentColor"><path d="M2 2h8M2 14h8" /><rect x="1" y="5" width="8" height="6" /><path d="M9 8l4-2v4z" /></svg>
          </TrayIcon>
          <TrayIcon>
            <svg width="16" height="14" viewBox="0 0 16 14" fill="none" stroke="currentColor"><rect x="3" y="1" width="12" height="9" /><path d="M9 10v3M6 13h6" /><rect x="0.500" y="0.500" width="4" height="5" fill="#1c1c1c" /></svg>
          </TrayIcon>
          <TrayIcon>
            <svg width="17" height="11" viewBox="0 0 17 11" fill="#e3e3e3"><path d="M3 11a3 3 0 0 1 0-6 5 5 0 0 1 9-2 4 4 0 0 1 2 8z" /></svg>
          </TrayIcon>
          <TrayIcon><Volume2 size={16} strokeWidth={1.100} /></TrayIcon>
          <Clock>5:18 PM<br />2/15/2023</Clock>
          <NotifyIcon><MessageSquare size={18} strokeWidth={1.200} /></NotifyIcon>
        </Tray>
      </Taskbar>
    </Page>
  );
}
